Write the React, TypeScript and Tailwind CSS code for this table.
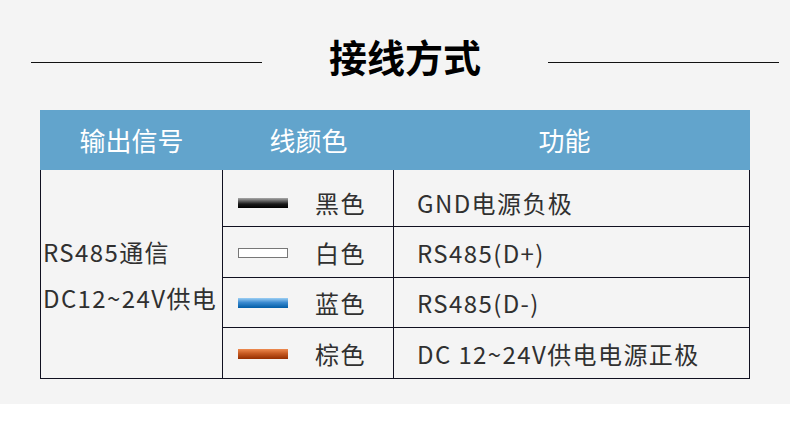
import React from "react";

const font = { fontFamily: '"Noto Sans CJK SC", "Noto Sans", sans-serif' };

const rows = [
  { swatch: "bg-[linear-gradient(to_bottom,#a8a8a8,#1a1a1a_60%,#000)]", color: "黑色", fn: "GND电源负极", h: "h-[57px] border-b", pad: "pt-[10px]" },
  { swatch: "bg-white border border-[#777]", color: "白色", fn: "RS485(D+)", h: "h-[51px] border-b", pad: "pt-[2px]" },
  { swatch: "bg-[linear-gradient(to_bottom,#9ccff4,#3a8ad0_45%,#005ca6)]", color: "蓝色", fn: "RS485(D-)", h: "h-[50px] border-b", pad: "pt-[1px]" },
  { swatch: "bg-[linear-gradient(to_bottom,#ee8a50,#c65a22_45%,#952e00)]", color: "棕色", fn: "DC 12~24V供电电源正极", h: "h-[50px]", pad: "pt-[1px]" },
];

export default function App() {
  return (
    <div className="w-[790px] h-[434px] bg-white" style={font}>
      <div className="h-[404px] bg-[#f4f4f4]">
        <div className="pt-[37px] ml-[31px] w-[748px] flex items-start">
          <div className="flex-1 mt-[25px] h-px bg-[#111]" />
          <div className="mx-[67px] h-[38px] text-[38px] leading-[38px] font-bold text-black">接线方式</div>
          <div className="flex-1 mt-[25px] h-px bg-[#111]" />
        </div>
        <div className="ml-[40px] mt-[35px] w-[710px]">
          <div className="h-[60px] bg-[#62a4cc] flex text-white text-[26px] leading-none">
            <div className="w-[183px] flex items-center justify-center">输出信号</div>
            <div className="w-[171px] flex items-center justify-center">线颜色</div>
            <div className="flex-1 flex items-center justify-center pr-[15px]">功能</div>
          </div>
          <div className="flex border-l border-r border-b border-[#101020] text-[24px] leading-none tracking-[1.4px] text-[#303030]">
            <div className="w-[182px] border-r border-[#101020] flex flex-col justify-center pl-[2px] gap-[22px] pt-[2px]">
              <div>RS485通信</div>
              <div>DC12~24V供电</div>
            </div>
            <div className="flex-1 flex flex-col">
              {rows.map((r) => (
                <div key={r.color} className={`flex border-[#101020] ${r.h}`}>
                  <div className={`w-[171px] border-r border-[#101020] flex items-center pl-[15px] ${r.pad}`}>
                    <div className={`w-[50px] h-[10px] ${r.swatch}`} />
                    <div className="ml-[27px]">{r.color}</div>
                  </div>
                  <div className={`flex-1 flex items-center pl-[23px] ${r.pad}`}>{r.fn}</div>
                </div>
              ))}
            </div>
          </div>
        </div>
      </div>
    </div>
  );
}
